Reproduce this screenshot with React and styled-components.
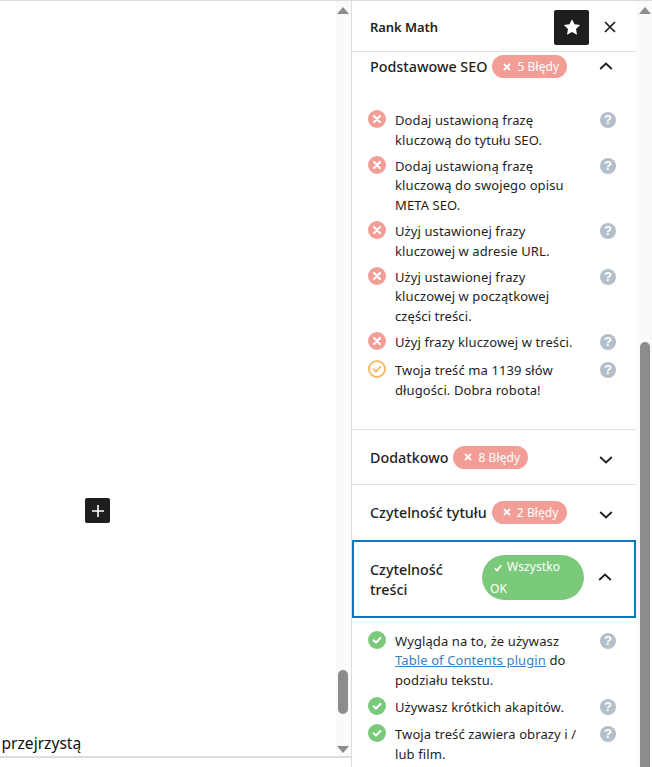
import React from "react";
import styled, { createGlobalStyle } from "styled-components";

const Global = createGlobalStyle`
  html, body { margin: 0; padding: 0; background: #fff; }
  body { font-family: "Noto Sans", "Open Sans", sans-serif; color: #1e1e1e; }
  * { box-sizing: border-box; }
`;

const Page = styled.div`
  width: 652px; height: 767px; overflow: hidden;
  display: grid; grid-template-columns: 351px 285px 16px;
  border-top: 1px solid #dcdcde; background: #fff;
`;
const EditorColumn = styled.div`
  height: 757px; display: grid; grid-template-columns: 336px 15px;
  border-bottom: 2px solid #dcdcde;
`;
const Canvas = styled.div`display: flex; flex-direction: column; height: 100%;`;
const AddButton = styled.div`
  width: 25px; height: 25px; margin: 497px 0 0 85px; background: #1e1e1e; border-radius: 2px;
  display: flex; align-items: center; justify-content: center; color: #fff;
`;
const CanvasText = styled.p`
  margin: auto 0 0 1.5px; padding-bottom: 1px; font-size: 15.6px; line-height: 24px; color: #111;
  font-family: "Noto Sans", sans-serif;
`;
const Track = styled.div`
  background: #fafafa; display: flex; flex-direction: column; align-items: center; position: relative;
  height: ${p => p.$h}px; padding: ${p => p.$inset};
`;
const Arrow = styled.div`
  width: 0; height: 0; border-left: 6px solid transparent; border-right: 6px solid transparent;
  ${p => p.$down ? "border-top: 7px solid #8c8c8c; margin-top: auto; margin-bottom: 3px;" : "border-bottom: 7px solid #8c8c8c; margin-top: 6px;"}
`;
const Thumb = styled.div`
  width: 10px; background: #8c8c8c; border-radius: 5px; flex: none;
  height: ${p => p.$h}px; margin-top: ${p => p.$top}px;
`;

const Sidebar = styled.aside`
  height: 767px; overflow: hidden; display: flex; flex-direction: column; border-left: 1px solid #dcdcde;
`;
const SidebarHeader = styled.header`
  height: 51px; flex: none; display: flex; align-items: center; border-bottom: 1px solid #e0e0e0;
  padding: 0 20px 0 18px;
`;
const SidebarTitle = styled.h2`margin: 2px 0 0; font-size: 13px; font-weight: 600; line-height: 20px; flex: 1; color: #1e1e1e; letter-spacing: -0.05px;`;
const StarButton = styled.div`
  width: 35px; height: 35px; background: #1e1e1e; border-radius: 2px; color: #fff;
  display: flex; align-items: center; justify-content: center; margin-right: 15px; margin-top: 2px;
`;
const CloseIcon = styled.div`display: flex; margin-top: 1px; color: #1e1e1e;`;

const Section = styled.section`flex: none; border-bottom: ${p => p.$open ? "0" : "1px solid #e0e0e0"};`;
const Heading = styled.div`
  display: flex; align-items: center; padding: ${p => p.$pad}; position: relative;
  ${p => p.$focus ? "border: 2px solid #007cba; height: 78px; margin-top: 1px;" : ""}
`;
const HeadingTitle = styled.span`
  font-size: 14.3px; font-weight: 500; line-height: 20px; color: #1e1e1e;
  ${p => p.$narrow ? "width: 112px; flex: none; margin-top: 2px;" : ""}
`;
const Badge = styled.span`
  flex: none; margin-left: 5px; border-radius: 24px; background: #f29e97;
  color: #fff; font-size: 12px; line-height: 23px; height: 23px; width: 75px; padding: 0 0 0 11px;
  display: flex; align-items: center; gap: 6px; white-space: nowrap; letter-spacing: .1px;
  position: relative; top: ${p => p.$nudge || 0}px;
`;
const WrapBadge = styled.span`
  flex: none; border-radius: 24px; background: #7bc97b; color: #fff; font-size: 12px; line-height: 22px;
  width: 102px; height: 45px; padding: 1px 16px 0 8px; letter-spacing: .1px; margin-bottom: 2px;
  svg { margin: 0 5px 0 4px; vertical-align: -1px; }
`;
const Chevron = styled.span`
  position: absolute; right: ${p => p.$r}px; top: ${p => p.$t}px; display: flex; color: #1e1e1e;
`;
const Checks = styled.ul`
  list-style: none; margin: 0; padding: ${p => p.$pad};
`;
const Row = styled.li`
  display: flex; align-items: flex-start; margin-bottom: 6.5px; margin-top: ${p => p.$gap || 0}px;
`;
const RowIcon = styled.span`display: flex; flex: none; width: 18px; height: 18px; margin: -1px 9px 0 0;`;
const RowText = styled.span`
  width: 186px; flex: none; font-size: 13px; line-height: 19.6px; color: #1e1e1e; letter-spacing: .1px;
  a { color: #3a7fc1; text-decoration: underline; }
`;
const Help = styled.span`
  flex: none; width: 16px; height: 16px; border-radius: 50%; background: #b4bfcb; color: #fff;
  margin-left: 19px; margin-top: 1px; font-size: 13px; line-height: 16px; font-weight: 700; text-align: center; font-family: "Liberation Sans", sans-serif;
`;

const FailIcon = () => (
  <svg width="18" height="18" viewBox="0 0 18 18"><circle cx="9" cy="9" r="9" fill="#f29e97"/><path d="M6 6l6 6M12 6l-6 6" stroke="#fff" strokeWidth="2.2" strokeLinecap="round"/></svg>
);
const OkIcon = () => (
  <svg width="18" height="18" viewBox="0 0 18 18"><circle cx="9" cy="9" r="9" fill="#7bc97b"/><path d="M5.6 9.2l2.4 2.4 4.4-4.6" stroke="#fff" strokeWidth="2" fill="none" strokeLinecap="round" strokeLinejoin="round"/></svg>
);
const WarnIcon = () => (
  <svg width="18" height="18" viewBox="0 0 18 18"><circle cx="9" cy="9" r="8" fill="#fff" stroke="#f6bb66" strokeWidth="2"/><path d="M5.6 9.2l2.4 2.4 4.4-4.8" stroke="#f6bb66" strokeWidth="1.8" fill="none" strokeLinecap="round" strokeLinejoin="round"/></svg>
);
const SmallX = () => (
  <svg width="8" height="8" viewBox="0 0 8 8"><path d="M1 1l6 6M7 1L1 7" stroke="#fff" strokeWidth="1.8"/></svg>
);
const SmallCheck = () => (
  <svg width="8" height="8" viewBox="0 0 8 8"><path d="M.8 4.4l2.2 2.2L7.2 1.4" stroke="#fff" strokeWidth="1.7" fill="none"/></svg>
);
const Up = () => (
  <svg width="14" height="8" viewBox="0 0 14 8"><path d="M1.2 7L7 1.6 12.8 7" fill="none" stroke="currentColor" strokeWidth="1.8"/></svg>
);
const Down = () => (
  <svg width="14" height="8" viewBox="0 0 14 8"><path d="M1.2 1L7 6.4 12.8 1" fill="none" stroke="currentColor" strokeWidth="1.8"/></svg>
);

const Item = ({ kind = "fail", gap, children }) => (
  <Row $gap={gap}>
    <RowIcon>{kind === "fail" ? <FailIcon /> : kind === "ok" ? <OkIcon /> : <WarnIcon />}</RowIcon>
    <RowText>{children}</RowText>
    <Help>?</Help>
  </Row>
);

const ErrBadge = ({ nudge, children }) => <Badge $nudge={nudge}><SmallX />{children}</Badge>;

export default function App() {
  return (
    <>
      <Global />
      <Page>
        <EditorColumn>
          <Canvas>
            <AddButton>
              <svg width="14" height="14" viewBox="0 0 14 14"><path d="M7 1v12M1 7h12" stroke="#fff" strokeWidth="1.6"/></svg>
            </AddButton>
            <CanvasText>przejrzystą</CanvasText>
          </Canvas>
          <Track $h={755} $inset="0 1px 0 0">
            <Arrow />
            <Thumb $h={44} $top={656} />
            <Arrow $down />
          </Track>
        </EditorColumn>
        <Sidebar>
          <SidebarHeader>
            <SidebarTitle>Rank Math</SidebarTitle>
            <StarButton>
              <svg width="18" height="18" viewBox="0 0 18 18"><path d="M9 1.2l2.5 5.1 5.6.8-4.1 4 1 5.6L9 14.1 4 16.7l1-5.6-4.1-4 5.6-.8z" fill="#fff"/></svg>
            </StarButton>
            <CloseIcon>
              <svg width="12" height="12" viewBox="0 0 12 12"><path d="M1 1l10 10M11 1L1 11" stroke="currentColor" strokeWidth="1.7"/></svg>
            </CloseIcon>
          </SidebarHeader>
          <Section>
            <Heading $pad="3px 0 0 18px">
              <HeadingTitle>Podstawowe SEO</HeadingTitle>
              <ErrBadge>5 Błędy</ErrBadge>
              <Chevron $r={23} $t={10}><Up /></Chevron>
            </Heading>
            <Checks $pad="33px 0 22px 16px">
              <Item>Dodaj ustawioną frazę kluczową do tytułu SEO.</Item>
              <Item>Dodaj ustawioną frazę kluczową do swojego opisu META SEO.</Item>
              <Item>Użyj ustawionej frazy kluczowej w adresie URL.</Item>
              <Item>Użyj ustawionej frazy kluczowej w początkowej części treści.</Item>
              <Item>Użyj frazy kluczowej w treści.</Item>
              <Item kind="warn" gap={8.5}>Twoja treść ma 1139 słów długości. Dobra robota!</Item>
            </Checks>
          </Section>
          <Section>
            <Heading $pad="17px 0 14px 18px">
              <HeadingTitle>Dodatkowo</HeadingTitle>
              <ErrBadge nudge={-1}>8 Błędy</ErrBadge>
              <Chevron $r={23} $t={26}><Down /></Chevron>
            </Heading>
          </Section>
          <Section $open>
            <Heading $pad="17px 0 14px 18px">
              <HeadingTitle>Czytelność tytułu</HeadingTitle>
              <ErrBadge nudge={-1}>2 Błędy</ErrBadge>
              <Chevron $r={23} $t={26}><Down /></Chevron>
            </Heading>
          </Section>
          <Section $open>
            <Heading $focus $pad="0 0 0 16px">
              <HeadingTitle $narrow>Czytelność treści</HeadingTitle>
              <WrapBadge><SmallCheck /><span>Wszystko OK</span></WrapBadge>
              <Chevron $r={22} $t={31}><Up /></Chevron>
            </Heading>
            <Checks $pad="14px 0 0 16px">
              <Item kind="ok">Wygląda na to, że używasz <a>Table of Contents plugin</a> do podziału tekstu.</Item>
              <Item kind="ok" gap={7.5}>Używasz krótkich akapitów.</Item>
              <Item kind="ok" gap={7.5}>Twoja treść zawiera obrazy i / lub film.</Item>
            </Checks>
          </Section>
        </Sidebar>
        <Track $h={766} $inset="0 0 0 2px">
          <Arrow />
          <Thumb $h={430} $top={328} />
        </Track>
      </Page>
    </>
  );
}
